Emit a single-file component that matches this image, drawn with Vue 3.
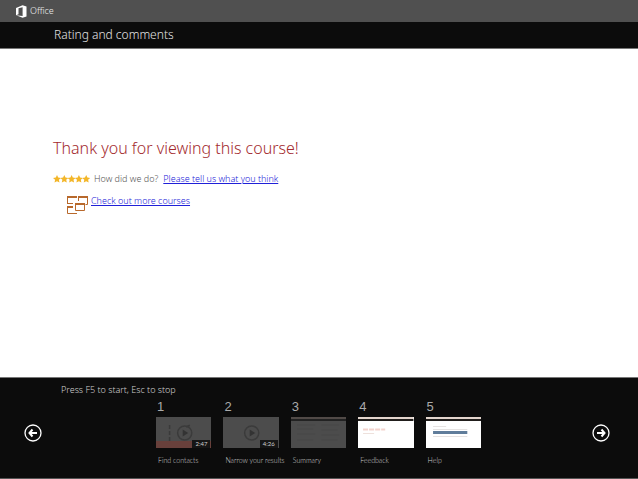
<script setup>
const lessons = [
  { id: 1, title: 'Find contacts', time: '2:47', kind: 'video', progress: true },
  { id: 2, title: 'Narrow your results', time: '4:26', kind: 'video' },
  { id: 3, title: 'Summary', kind: 'summary' },
  { id: 4, title: 'Feedback', kind: 'feedback' },
  { id: 5, title: 'Help', kind: 'help' }
]
const stars = [0, 1, 2, 3, 4]
</script>

<template>
  <div class="page">
    <header class="brand">
      <svg class="logo" viewBox="0 0 11 13" aria-hidden="true">
        <path fill="#fff" fill-rule="evenodd" d="M0 3 6.6.3 10.500 1.500V11.500L6.600 12.700 0 10.300 6.600 11V2.300L2.500 3.300V9.200L0 10.300Z" />
      </svg>
      <span>Office</span>
    </header>
    <div class="title-bar"><h1>Rating and comments</h1></div>

    <main>
      <h2>Thank you for viewing this course!</h2>
      <p class="rate">
        <svg class="stars" viewBox="0 0 38 8" aria-hidden="true">
          <path
            v-for="s in stars" :key="s" fill="#f3b629" :transform="`translate(${s * 7.3} 0)`"
            d="M4 0 5.200 2.600 8 2.900 5.900 4.800 6.500 7.600 4 6.200 1.500 7.600 2.100 4.800 0 2.900 2.800 2.600Z"
          />
        </svg>
        <span class="ask">How did we do?</span>
        <a href="#rate">Please tell us what you think</a>
      </p>
      <p class="more">
        <svg class="windows" viewBox="0 0 21 19" aria-hidden="true">
          <g fill="none" stroke="#b8692c">
            <path d="M.5 8V1M.5 7.500H6M11.500 1V5M20.500 1V8.500H18.500M.5 11V17.500H10M8.500 8V14.500H17.500V8" />
            <path stroke-width="2" d="M0 1H10M11 1H21M8 8H18M0 11H6" />
          </g>
        </svg>
        <a href="#courses">Check out more courses</a>
      </p>
    </main>

    <footer>
      <button class="nav" type="button" aria-label="Previous">
        <svg viewBox="0 0 18 18"><circle cx="9" cy="9" r="8" /><path class="arrow" d="M13 9H6M8.500 5.500 5.500 9l3 3.500" /></svg>
      </button>
      <section class="strip">
        <p class="hint">Press F5 to start, Esc to stop</p>
        <ol>
          <li v-for="l in lessons" :key="l.id">
            <span class="num">{{ l.id }}</span>
            <div class="thumb" :class="l.kind">
              <svg viewBox="0 0 55 31" preserveAspectRatio="none" aria-hidden="true">
                <template v-if="l.kind === 'video'">
                  <rect v-if="l.progress" y="24" width="55" height="7" fill="#68403b" />
                  <path v-if="l.progress" d="M13.500 8V24M30 10l4-2" stroke="#3a3a3a" stroke-width="1.500" stroke-dasharray="4 2" fill="none" />
                  <circle cx="28.500" cy="16" r="7" fill="none" stroke="#3b3b3b" stroke-width="1.500" />
                  <path d="M26.500 12.500 32 16l-5.500 3.500Z" fill="#333" />
                </template>
                <template v-else-if="l.kind === 'summary'">
                  <rect width="55" height="2" fill="#514a47" /><rect y="2" width="55" height="2" fill="#222" />
                  <path d="M6 8H24M30 8H48M6 12H22M30 13H46M6 17H24M30 18H48M6 23H22M30 23H46" stroke="#474747" fill="none" />
                </template>
                <template v-else>
                  <rect width="55" height="2" fill="#e3d5cd" /><rect y="2" width="55" height="2" fill="#211e1c" />
                  <template v-if="l.kind === 'feedback'">
                    <path d="M5 12.500H27" stroke="#f3d3cd" stroke-width="2" stroke-dasharray="5 1" /><path d="M5 16.500H16" stroke="#eee1dc" />
                  </template>
                  <template v-else>
                    <path d="M7 9.500H20M7 12.500H41M7 19.500H41" stroke="#e6e3e2" /><rect x="7" y="14" width="34" height="3" fill="#607d9b" />
                  </template>
                </template>
              </svg>
              <span v-if="l.time" class="time">{{ l.time }}</span>
            </div>
            <span class="name">{{ l.title }}</span>
          </li>
        </ol>
      </section>
      <button class="nav" type="button" aria-label="Next">
        <svg viewBox="0 0 18 18"><circle cx="9" cy="9" r="8" /><path class="arrow" d="M5 9h7M9.500 5.500 12.500 9l-3 3.500" /></svg>
      </button>
    </footer>
  </div>
</template>

<style>
body { margin: 0; background: #fff; }
</style>

<style scoped>
.page { display: flex; flex-direction: column; min-height: 100vh; font-family: "Noto Sans", "Open Sans", sans-serif; font-weight: 300; }
h1, h2, p, ol { margin: 0; padding: 0; font-weight: 300; }
.brand { display: flex; align-items: center; gap: 3px; height: 22px; padding-left: 16px; background: #505050; color: #eee; font-size: 9px; line-height: 22px; }
.logo { width: 11px; height: 13px; }
.title-bar { height: 26px; padding-left: 54px; background: #0c0c0c; border-bottom: 1px solid #777; color: #e4e4e4; }
h1 { font-size: 12px; line-height: 26px; }
main { flex: 1; padding: 87px 53px 0; }
h2 { color: #a32a2e; font-size: 16px; line-height: 24px; }
.rate, .more { display: flex; align-items: center; font-size: 9px; line-height: 14px; }
.rate { gap: 3px; margin-top: 12px; }
.ask { margin-right: 2px; color: #555; }
.stars { width: 38px; height: 8px; }
.more { align-items: flex-start; gap: 3px; margin: 8px 0 0 14px; }
.windows { width: 21px; height: 19px; margin-top: 2px; }
a { color: #2020d8; }
footer { display: flex; justify-content: space-between; align-items: flex-start; height: 100px; padding: 0 28px 0 24px; background: #0c0c0c; border-top: 1px solid #777; border-bottom: 1px solid #555; color: #d0d0d0; }
.nav { width: 18px; height: 18px; margin-top: 46px; padding: 0; border: 0; background: none; }
.nav svg { display: block; width: 18px; height: 18px; fill: none; stroke: #fff; stroke-width: 1.3; }
.nav .arrow { stroke-width: 2; }
.strip { flex: 1; padding: 4px 0 0 19px; }
.hint { font-size: 9px; line-height: 16px; }
ol { display: grid; grid-template-columns: repeat(5, minmax(0, 1fr)); column-gap: 12px; width: 325px; margin-left: 95px; list-style: none; }
li { display: flex; flex-direction: column; }
.num { padding-left: 1px; color: #aaa; font: 13px/18px "Liberation Sans", sans-serif; }
.thumb { position: relative; height: 31px; margin-top: 1px; background: #fff; }
.thumb svg { display: block; width: 100%; height: 100%; }
.video, .summary { background: #4c4c4c; }
.time { position: absolute; right: 1px; bottom: 0; padding: 0 3px; background: #151515; font-family: Lato, sans-serif; font-size: 6px; line-height: 8px; font-weight: 400; }
.name { margin-top: 7px; padding-left: 2px; font-family: Lato, sans-serif; font-size: 7px; line-height: 10px; font-weight: 300; white-space: nowrap; }
</style>
